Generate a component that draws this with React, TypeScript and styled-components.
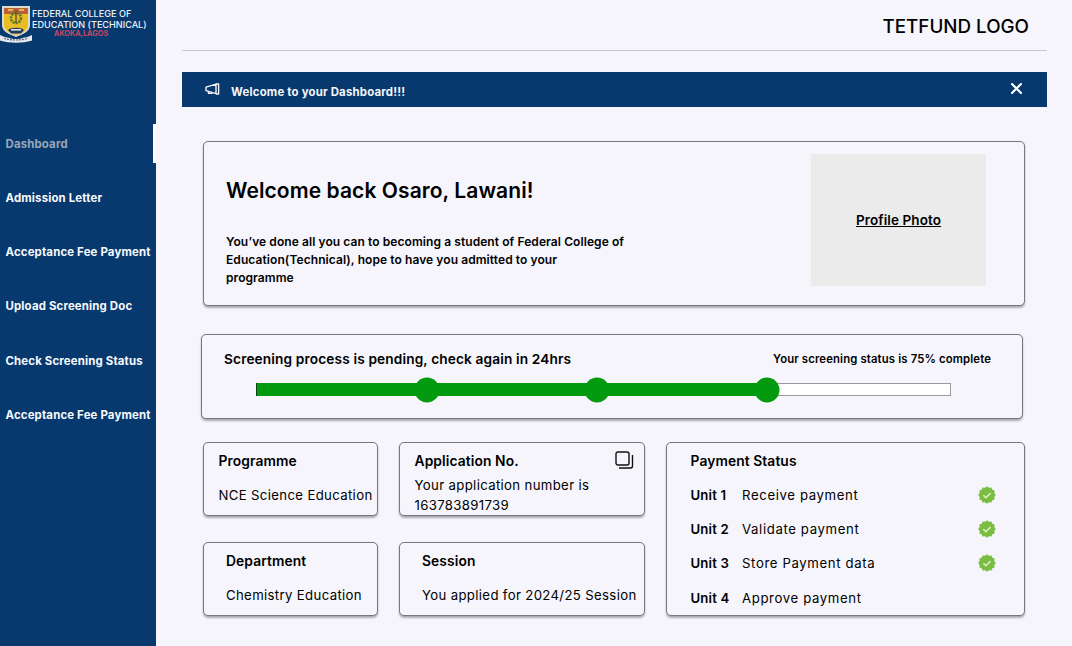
import React from "react";
import styled, { createGlobalStyle } from "styled-components";

const Global = createGlobalStyle`
  html, body { margin: 0; padding: 0; background: #f5f5fb; }
  body { font-family: Inter, "Noto Sans", "Liberation Sans", sans-serif; color: #000; }
  * { box-sizing: border-box; }
`;

const Page = styled.div`
  display: flex;
  width: 1072px;
  height: 646px;
  overflow: hidden;
  background: #f5f5fb;
`;

const Sidebar = styled.aside`
  flex: 0 0 156px;
  background: #07396f;
  display: flex;
  flex-direction: column;
`;

const Brand = styled.div`
  height: 124px;
  display: flex;
  align-items: flex-start;
  padding-top: 5px;
`;

const BrandText = styled.div`
  padding-top: 4px;
  font-size: 9.1px;
  line-height: 10.5px;
  font-weight: 500;
  color: #eef2f8;
  white-space: nowrap;
`;

const BrandPlace = styled.div`
  font-size: 7.4px;
  line-height: 8px;
  font-weight: 600;
  color: #d8495f;
  padding-left: 22px;
`;

const Nav = styled.nav`
  display: flex;
  flex-direction: column;
  gap: 15.3px;
`;

const NavItem = styled.a<{ $active?: boolean }>`
  height: 39px;
  display: flex;
  align-items: center;
  padding-left: 5.5px;
  font-size: 11.4px;
  letter-spacing: 0.17px;
  font-weight: 700;
  white-space: nowrap;
  color: ${(p) => (p.$active ? "#9aa7b6" : "#f7f9fc")};
  border-right: 3px solid ${(p) => (p.$active ? "#fbfbff" : "transparent")};
`;

const Main = styled.main`
  flex: 0 0 865px;
  margin-left: 26px;
  display: flex;
  flex-direction: column;
`;

const Header = styled.header`
  height: 51px;
  border-bottom: 1px solid #c9c9cd;
  display: flex;
  justify-content: flex-end;
  align-items: center;
  padding: 2px 18px 0 0;
  font-size: 18.8px;
  font-weight: 500;
`;

const Banner = styled.div`
  margin-top: 21px;
  height: 35px;
  background: #07396f;
  color: #f4f6fa;
  display: flex;
  align-items: center;
  padding: 0 25px 0 23px;
  font-size: 11.4px;
  letter-spacing: 0.2px;
  font-weight: 700;
`;

const BannerText = styled.span`
  margin-left: 11px;
  padding-top: 4px;
  flex: 1;
`;

const Card = styled.section`
  background: #f5f5fb;
  border: 1px solid #77777d;
  border-radius: 5px;
  box-shadow: 0 1.5px 2px rgba(0, 0, 0, 0.3);
`;

const WelcomeCard = styled(Card)`
  margin: 34px 22px 0 21px;
  height: 165px;
  padding: 12px 38px 0 22px;
  display: flex;
  justify-content: space-between;
`;

const WelcomeCopy = styled.div`
  width: 400px;
`;

const Title = styled.h1`
  margin: 24px 0 0;
  font-size: 21px;
  letter-spacing: 0.08px;
  line-height: 26px;
  font-weight: 600;
  white-space: nowrap;
`;

const Lead = styled.p`
  margin: 29px 0 0;
  font-size: 12px;
  letter-spacing: 0.08px;
  line-height: 17.8px;
  font-weight: 600;
`;

const Photo = styled.div`
  width: 175px;
  height: 132px;
  background: #ebebeb;
  display: flex;
  align-items: center;
  justify-content: center;
  font-size: 13.5px;
  letter-spacing: 0.1px;
  font-weight: 600;
  text-decoration: underline;
`;

const ProgressCard = styled(Card)`
  margin: 28px 24px 0 19px;
  height: 85px;
  padding: 15px 31px 0 22px;
`;

const ProgressHead = styled.div`
  display: flex;
  justify-content: space-between;
  align-items: center;
  height: 18px;
`;

const ProgressTitle = styled.span`
  font-size: 13.7px;
  letter-spacing: 0.13px;
  font-weight: 600;
`;

const ProgressNote = styled.span`
  font-size: 11.3px;
  letter-spacing: 0.15px;
  font-weight: 600;
`;

const Track = styled.div`
  position: relative;
  margin: 15px 40px 0 32px;
  width: 695px;
  height: 13px;
  background: #fff;
  border: 1px solid #9a9a9f;
`;

const Fill = styled.div`
  position: absolute;
  left: -1px;
  top: -1px;
  bottom: -1px;
  background: #049a10;
  border-left: 1px solid #10401a;
`;

const Dot = styled.div`
  position: absolute;
  top: 50%;
  width: 25px;
  height: 25px;
  border-radius: 50%;
  background: #049a10;
  transform: translate(-50%, -50%);
`;

const InfoGrid = styled.div`
  margin: 23px 22px 0 21px;
  display: grid;
  grid-template-columns: 175px 246px 359px;
  grid-template-rows: 74px 74px;
  column-gap: 21px;
  row-gap: 26px;
`;

const InfoCard = styled(Card)<{ $inset?: number }>`
  position: relative;
  padding: 9px 3px 0 ${(p) => p.$inset ?? 14.5}px;
`;

const InfoTitle = styled.h2`
  margin: 0;
  font-size: 13.8px;
  letter-spacing: 0.1px;
  line-height: 18px;
  font-weight: 600;
  white-space: nowrap;
`;

const InfoBody = styled.p<{ $gap?: number }>`
  margin: ${(p) => p.$gap ?? 15}px 0 0;
  font-size: 13.2px;
  letter-spacing: 0.34px;
  line-height: 20px;
  font-weight: 400;
`;

const CopyIcon = styled.svg`
  position: absolute;
  top: 8px;
  right: 10px;
`;

const PaymentCard = styled(Card)`
  grid-column: 3;
  grid-row: 1 / span 2;
  padding: 9px 28px 0 23.5px;
`;

const UnitRow = styled.div`
  height: 34.2px;
  display: flex;
  align-items: center;
  font-size: 13.2px;
`;

const UnitName = styled.span`
  flex: 0 0 51.5px;
  font-weight: 600;
  letter-spacing: 0.15px;
`;

const UnitTask = styled.span`
  flex: 1;
  letter-spacing: 0.62px;
`;

const UnitList = styled.div`
  margin-top: 8px;
`;

const Crest = () => (
  <svg width="32" height="38" viewBox="0 0 32 38" style={{ flex: "none" }}>
    <path d="M2 1h28v19c0 6-6 9-14 12C8 29 2 26 2 20z" fill="#dcdccc" />
    <path d="M4 3h24v17c0 5-5 8-12 10C9 28 4 25 4 20z" fill="#e9bd24" />
    <path d="M4 3h24v6H4z" fill="#b9603a" />
    <path d="M8 5h5M19 5h5" stroke="#f0d060" strokeWidth="1.6" />
    <circle cx="16" cy="13" r="5" fill="none" stroke="#4f7a2c" strokeWidth="2.6" strokeDasharray="2 1" />
    <path d="M16 5v13" stroke="#7a4a24" strokeWidth="1.4" />
    <path d="M8 25c3-3 13-3 16 0l-3 3.5H11z" fill="#1d3a6e" />
    <path d="M11 24h10v1.6H11z" fill="#e9e6d6" />
    <path d="M0 30c4 2 6 2.5 8 2.5 5 2 11 2 16 0 2 0 4-.5 8-2.5v5.5c-10 3-22 3-32 0z" fill="#e6e9ee" />
    <path d="M4 33.5c8 2 16 2 24 0" fill="none" stroke="#51627d" strokeWidth="1.2" strokeDasharray="2 1" />
  </svg>
);

const Megaphone = () => (
  <svg width="15" height="13" viewBox="0 0 15 13" fill="none" stroke="#f4f6fa" strokeWidth="1.4" strokeLinejoin="round">
    <path d="M1 4.2 11 1.2v9.4L1 7.6z" />
    <path d="M11 1h2.6v10H11" />
    <path d="M3.5 8.2v2.2h3.2V9.4" />
  </svg>
);

const CloseIcon = () => (
  <svg width="11" height="11" viewBox="0 0 11 11" stroke="#fff" strokeWidth="2.1" strokeLinecap="round" style={{ marginTop: -2 }}>
    <path d="M1 1l9 9M10 1l-9 9" />
  </svg>
);

const Badge = () => {
  const pts: string[] = [];
  for (let i = 0; i < 24; i++) {
    const r = i % 2 ? 7.6 : 8.8;
    const a = (i * Math.PI) / 12;
    pts.push(`${(9 + r * Math.cos(a)).toFixed(2)},${(9 + r * Math.sin(a)).toFixed(2)}`);
  }
  return (
    <svg width="18" height="18" viewBox="0 0 18 18">
      <polygon points={pts.join(" ")} fill="#7bbd42" />
      <path d="M5.4 9.3l2.5 2.4 4.7-4.8" fill="none" stroke="#dff0c4" strokeWidth="1.5" />
    </svg>
  );
};

const navItems = [
  "Dashboard",
  "Admission Letter",
  "Acceptance Fee Payment",
  "Upload Screening Doc",
  "Check Screening Status",
  "Acceptance Fee Payment",
];

const units = [
  { name: "Unit 1", task: "Receive payment", done: true },
  { name: "Unit 2", task: "Validate payment", done: true },
  { name: "Unit 3", task: "Store Payment data", done: true },
  { name: "Unit 4", task: "Approve payment", done: false },
];

const steps = [170, 340, 510];

export default function App() {
  return (
    <Page>
      <Global />
      <Sidebar>
        <Brand>
          <Crest />
          <BrandText>
            FEDERAL COLLEGE OF
            <br />
            EDUCATION (TECHNICAL)
            <BrandPlace>AKOKA,LAGOS</BrandPlace>
          </BrandText>
        </Brand>
        <Nav>
          {navItems.map((label, i) => (
            <NavItem key={i} $active={i === 0}>
              {label}
            </NavItem>
          ))}
        </Nav>
      </Sidebar>
      <Main>
        <Header>TETFUND LOGO</Header>
        <Banner>
          <Megaphone />
          <BannerText>Welcome to your Dashboard!!!</BannerText>
          <CloseIcon />
        </Banner>
        <WelcomeCard>
          <WelcomeCopy>
            <Title>Welcome back Osaro, Lawani!</Title>
            <Lead>
              You’ve done all you can to becoming a student of Federal College of Education(Technical), hope to have
              you admitted to your programme
            </Lead>
          </WelcomeCopy>
          <Photo>Profile Photo</Photo>
        </WelcomeCard>
        <ProgressCard>
          <ProgressHead>
            <ProgressTitle>Screening process is pending, check again in 24hrs</ProgressTitle>
            <ProgressNote>Your screening status is 75% complete</ProgressNote>
          </ProgressHead>
          <Track>
            <Fill style={{ width: 511 }} />
            {steps.map((x) => (
              <Dot key={x} style={{ left: x }} />
            ))}
          </Track>
        </ProgressCard>
        <InfoGrid>
          <InfoCard>
            <InfoTitle>Programme</InfoTitle>
            <InfoBody>NCE Science Education</InfoBody>
          </InfoCard>
          <InfoCard>
            <InfoTitle>Application No.</InfoTitle>
            <InfoBody $gap={5}>Your application number is 163783891739</InfoBody>
            <CopyIcon width="19" height="18" viewBox="0 0 19 18" fill="none" stroke="#111" strokeWidth="1.4">
              <rect x="1" y="1" width="13" height="13" rx="2" />
              <path d="M17.5 4v11a2 2 0 0 1-2 2H4" />
            </CopyIcon>
          </InfoCard>
          <PaymentCard>
            <InfoTitle>Payment Status</InfoTitle>
            <UnitList>
              {units.map((u) => (
                <UnitRow key={u.name}>
                  <UnitName>{u.name}</UnitName>
                  <UnitTask>{u.task}</UnitTask>
                  {u.done && <Badge />}
                </UnitRow>
              ))}
            </UnitList>
          </PaymentCard>
          <InfoCard $inset={22}>
            <InfoTitle>Department</InfoTitle>
            <InfoBody>Chemistry Education</InfoBody>
          </InfoCard>
          <InfoCard $inset={22}>
            <InfoTitle>Session</InfoTitle>
            <InfoBody>You applied for 2024/25 Session</InfoBody>
          </InfoCard>
        </InfoGrid>
      </Main>
    </Page>
  );
}
